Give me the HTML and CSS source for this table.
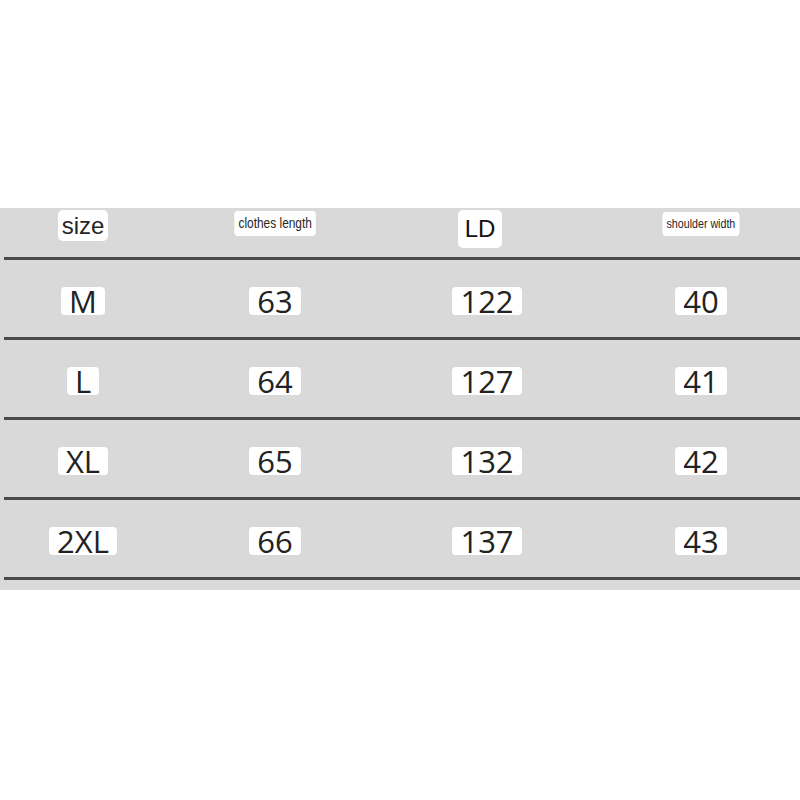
FILE: index.html
```html
<!DOCTYPE html>
<html lang="en">
<head>
<meta charset="utf-8">
<title>Size chart</title>
<link rel="stylesheet" href="styles.css">
</head>
<body>
<div class="sheet">
  <div class="row head">
    <div class="cell"><span class="tag tag-size">size</span></div>
    <div class="cell"><span class="tag tag-small tag-cl">clothes length</span></div>
    <div class="cell"><span class="tag tag-ld">LD</span></div>
    <div class="cell"><span class="tag tag-small tag-sw">shoulder width</span></div>
  </div>
  <div class="row">
    <div class="cell"><span class="val">M</span></div>
    <div class="cell"><span class="val">63</span></div>
    <div class="cell"><span class="val">122</span></div>
    <div class="cell"><span class="val">40</span></div>
  </div>
  <div class="row">
    <div class="cell"><span class="val">L</span></div>
    <div class="cell"><span class="val">64</span></div>
    <div class="cell"><span class="val">127</span></div>
    <div class="cell"><span class="val">41</span></div>
  </div>
  <div class="row">
    <div class="cell"><span class="val">XL</span></div>
    <div class="cell"><span class="val">65</span></div>
    <div class="cell"><span class="val">132</span></div>
    <div class="cell"><span class="val">42</span></div>
  </div>
  <div class="row">
    <div class="cell"><span class="val">2XL</span></div>
    <div class="cell"><span class="val">66</span></div>
    <div class="cell"><span class="val">137</span></div>
    <div class="cell"><span class="val">43</span></div>
  </div>
</div>
</body>
</html>
```

FILE: styles.css
```css
html, body {
  margin: 0;
  padding: 0;
  background: #ffffff;
  overflow: hidden;
}

body {
  width: 800px;
  height: 800px;
}

.sheet {
  margin-top: 208px;
  background: #d9d9d9;
  padding-bottom: 10px;
  overflow: hidden;
}

.row {
  margin-left: 4px;
  display: grid;
  grid-template-columns: 158px 226px 198px 230px;
  height: 72px;
  align-items: center;
  border-bottom: 3px solid #4a4a4a;
  padding-top: 5px;
  box-sizing: content-box;
}

.row.head {
  height: 47px;
  padding-top: 2px;
  align-items: start;
}

.cell {
  display: flex;
  justify-content: center;
}

.tag {
  background: #ffffff;
  color: #262626;
  font-family: "Liberation Sans", Arial, sans-serif;
  border-radius: 5px;
  display: inline-block;
  white-space: nowrap;
}

.tag-size {
  font-size: 24px;
  line-height: 31px;
  padding: 0 4px;
}

.tag-ld {
  font-size: 24px;
  line-height: 38px;
  padding: 0 7px;
  margin-right: 14px;
  color: #111;
}

.tag-small {
  transform-origin: center;
  border-radius: 4px;
}

.tag-cl {
  font-size: 14px;
  line-height: 19px;
  padding: 3px 5px;
  margin-top: 1px;
  transform: scaleX(0.85);
}

.tag-sw {
  font-size: 13px;
  line-height: 18px;
  padding: 3px 5px;
  margin-top: 2px;
  transform: scaleX(0.82);
}

.val {
  background: #ffffff;
  color: #222222;
  font-family: "Open Sans", "Noto Sans", sans-serif;
  font-size: 31px;
  line-height: 28px;
  height: 28px;
  padding: 0 8px;
  border-radius: 4px;
  display: inline-block;
}
```
